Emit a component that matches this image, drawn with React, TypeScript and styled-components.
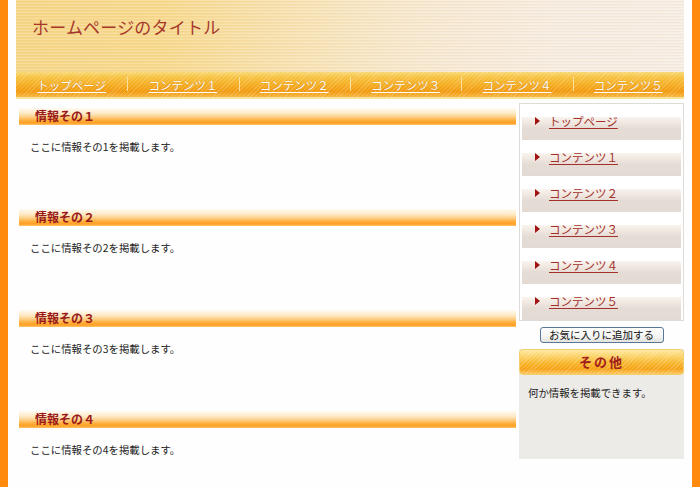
import React from "react";
import styled, { createGlobalStyle } from "styled-components";

const jp = `"Noto Sans CJK JP", "Noto Sans", "Liberation Sans", sans-serif`;

const GlobalStyle = createGlobalStyle`
  html, body {
    margin: 0;
    padding: 0;
    background: #ffffff;
  }
  body {
    font-family: ${jp};
    color: #333333;
  }
  * { box-sizing: border-box; }
`;

const Page = styled.div`
  min-height: 487px;
  border-left: 8px solid #ff8a0d;
  border-right: 8px solid #ff8a0d;
  padding: 0 8px;
  background: #fefefe;
`;

const Header = styled.header`
  height: 72px;
  padding: 16px 0 0 16px;
  background:
    repeating-linear-gradient(
      to bottom,
      rgba(255, 255, 255, 0.18) 0px,
      rgba(255, 255, 255, 0.18) 1px,
      rgba(230, 170, 90, 0.10) 1px,
      rgba(230, 170, 90, 0.10) 2px,
      rgba(255, 255, 255, 0) 2px,
      rgba(255, 255, 255, 0) 3px
    ),
    linear-gradient(
      to right,
      #f6d688 0%,
      #f7d98e 22%,
      #f6e1b0 40%,
      #f6e8cf 58%,
      #f6ede2 80%,
      #f5eee6 100%
    );
`;

const SiteTitle = styled.h1`
  margin: 0;
  font-size: 17px;
  line-height: 22px;
  font-weight: normal;
  color: #a6382a;
  letter-spacing: 0.2px;
`;

const Nav = styled.nav`
  display: flex;
  height: 27px;
  border-bottom: 2px solid #f9e29a;
  background:
    repeating-linear-gradient(
      -45deg,
      rgba(255, 255, 255, 0.16) 0px,
      rgba(255, 255, 255, 0.16) 1px,
      rgba(255, 255, 255, 0) 1px,
      rgba(255, 255, 255, 0) 3px
    ),
    linear-gradient(
      to bottom,
      #f8d978 0%,
      #f7c445 18%,
      #f5b126 45%,
      #f29a10 78%,
      #f6b640 100%
    );
`;

const NavItem = styled.a<{ $first?: boolean }>`
  flex: 1;
  display: flex;
  align-items: center;
  justify-content: center;
  font-size: 11.5px;
  color: #ffffff;
  text-decoration: underline;
  text-underline-offset: 2px;
  text-shadow: 0 0 1px rgba(150, 70, 0, 0.6);
  position: relative;
  &::before {
    content: "";
    display: ${(p) => (p.$first ? "none" : "block")};
    position: absolute;
    left: 0;
    top: 5px;
    bottom: 6px;
    width: 1px;
    background: #fbe0a0;
  }
`;

const Body = styled.div`
  display: flex;
  align-items: flex-start;
  gap: 3px;
  padding: 4px 0 0 3px;
`;

const Main = styled.main`
  width: 497px;
  padding-top: 5px;
`;

const Section = styled.section`
  height: 101px;
  &:last-child {
    height: auto;
  }
`;

const SectionHeading = styled.h2`
  margin: 0;
  height: 17px;
  padding-left: 16px;
  font-size: 12px;
  line-height: 16px;
  font-weight: bold;
  color: #9a1a1a;
  background: linear-gradient(
    to bottom,
    #fffaf2 0%,
    #fdebc8 30%,
    #fdd08a 52%,
    #ffb040 72%,
    #ff9f22 88%,
    #ffc46e 100%
  );
`;

const SectionText = styled.p`
  margin: 15px 0 0 11px;
  font-size: 10.4px;
  line-height: 14px;
  color: #222222;
`;

const Side = styled.aside`
  width: 165px;
  display: flex;
  flex-direction: column;
  align-items: stretch;
`;

const Menu = styled.ul`
  list-style: none;
  margin: 0;
  padding: 0 2px;
  border: 1px solid #dedcd8;
  background: #ffffff;
`;

const MenuItem = styled.li`
  height: 36px;
  padding: 10px 0 0 13px;
  display: flex;
  align-items: flex-start;
  gap: 9px;
  background: linear-gradient(
    to bottom,
    #ffffff 0px,
    #ffffff 13px,
    #faf4ef 13px,
    #f1e9e2 18px,
    #e5ddd5 24px,
    #e3dbd3 36px
  );
`;

const Arrow = styled.span`
  width: 0;
  height: 0;
  margin-top: 3px;
  border-top: 4px solid transparent;
  border-bottom: 4px solid transparent;
  border-left: 5px solid #a01414;
`;

const MenuLink = styled.a`
  font-size: 11.5px;
  line-height: 14px;
  color: #a3302a;
  text-decoration: underline;
  text-underline-offset: 2px;
`;

const FavButton = styled.button`
  align-self: center;
  margin-top: 6px;
  width: 124px;
  height: 16px;
  padding: 0;
  border: 1px solid #58789a;
  border-radius: 3px;
  background: linear-gradient(to bottom, #ffffff 0%, #f4f4f2 60%, #e2e2de 100%);
  font-family: ${jp};
  font-size: 10.5px;
  line-height: 14px;
  color: #111111;
`;

const OtherBox = styled.div`
  margin-top: 6px;
  background: #ecebe8;
  height: 110px;
`;

const OtherHeading = styled.h3`
  margin: 0;
  height: 26px;
  border: 1px solid #f2cf6c;
  border-radius: 4px;
  text-align: center;
  font-size: 13px;
  line-height: 24px;
  font-weight: bold;
  letter-spacing: 2px;
  color: #a2201c;
  background:
    repeating-linear-gradient(
      -45deg,
      rgba(255, 255, 255, 0.18) 0px,
      rgba(255, 255, 255, 0.18) 1px,
      rgba(255, 255, 255, 0) 1px,
      rgba(255, 255, 255, 0) 3px
    ),
    linear-gradient(
      to bottom,
      #ffe9a0 0%,
      #fbd36a 25%,
      #f8b52a 55%,
      #f6a215 80%,
      #fcc760 100%
    );
`;

const OtherText = styled.p`
  margin: 0;
  padding: 11px 0 0 9px;
  font-size: 10.4px;
  line-height: 14px;
  color: #222222;
`;

const navItems = [
  "トップページ",
  "コンテンツ１",
  "コンテンツ２",
  "コンテンツ３",
  "コンテンツ４",
  "コンテンツ５",
];

const sections = [
  { title: "情報その１", text: "ここに情報その1を掲載します。" },
  { title: "情報その２", text: "ここに情報その2を掲載します。" },
  { title: "情報その３", text: "ここに情報その3を掲載します。" },
  { title: "情報その４", text: "ここに情報その4を掲載します。" },
];

export default function App() {
  return (
    <>
      <GlobalStyle />
      <Page>
        <Header>
          <SiteTitle>ホームページのタイトル</SiteTitle>
        </Header>
        <Nav>
          {navItems.map((label, i) => (
            <NavItem key={label} href="#" $first={i === 0}>
              {label}
            </NavItem>
          ))}
        </Nav>
        <Body>
          <Main>
            {sections.map((s) => (
              <Section key={s.title}>
                <SectionHeading>{s.title}</SectionHeading>
                <SectionText>{s.text}</SectionText>
              </Section>
            ))}
          </Main>
          <Side>
            <Menu>
              {navItems.map((label) => (
                <MenuItem key={label}>
                  <Arrow />
                  <MenuLink href="#">{label}</MenuLink>
                </MenuItem>
              ))}
            </Menu>
            <FavButton type="button">お気に入りに追加する</FavButton>
            <OtherBox>
              <OtherHeading>その他</OtherHeading>
              <OtherText>何か情報を掲載できます。</OtherText>
            </OtherBox>
          </Side>
        </Body>
      </Page>
    </>
  );
}
